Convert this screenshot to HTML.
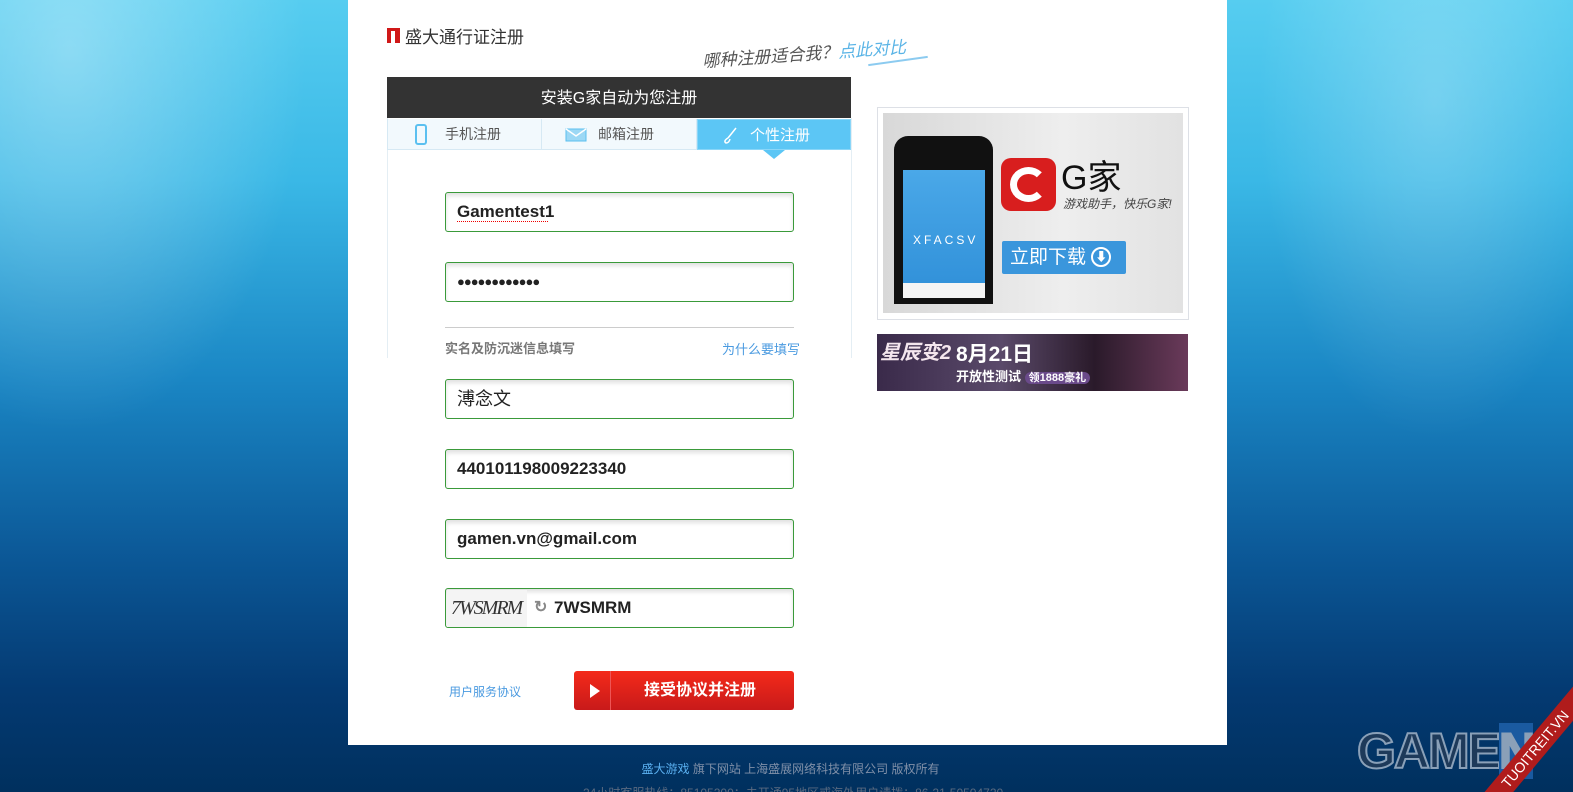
<!DOCTYPE html>
<html><head><meta charset="utf-8"><style>
*{margin:0;padding:0;box-sizing:border-box}
html,body{width:1573px;height:792px;overflow:hidden;background:#00305e}
body{position:relative;font-family:"Liberation Sans","Noto Sans CJK SC",sans-serif;}
.bg{position:absolute;left:0;top:0;width:1573px;height:792px;background:linear-gradient(180deg,#56cdf0 0px,#3ab8e6 180px,#1a86c4 380px,#0b5796 560px,#043a72 690px,#00305e 792px);}
.glow{position:absolute;left:0;top:0;width:348px;height:500px;background:radial-gradient(ellipse at 20% 10%,rgba(255,255,255,.35),rgba(255,255,255,0) 60%)}
.glow2{position:absolute;left:1227px;top:0;width:346px;height:500px;background:radial-gradient(ellipse at 60% 20%,rgba(255,255,255,.25),rgba(255,255,255,0) 60%)}
.panel{position:absolute;left:348px;top:0;width:879px;height:745px;background:#fff}
.abs{position:absolute}
.inp{position:absolute;left:445px;width:349px;height:40px;border:1px solid #3a9a3a;border-radius:3px;box-shadow:inset 0 3px 4px rgba(0,0,0,.12);font-size:17px;font-weight:bold;color:#222;padding-left:11px;line-height:38px;background:#fff}
.tab{position:absolute;top:119px;height:31px;font-size:14px;color:#555;line-height:31px;background:#f2f9fd;border-right:1px solid #d6e9f4}
</style></head><body>
<div class="bg"></div>
<div class="glow"></div><div class="glow2"></div>
<div class="panel"></div>
<div class="abs" style="left:387px;top:28px;width:13px;height:15px;background:#d01818"></div>
<div class="abs" style="left:391px;top:31px;width:4px;height:12px;background:#fff"></div>
<div class="abs" style="left:405px;top:23px;font-size:17px;color:#333">盛大通行证注册</div>
<div class="abs" style="left:702px;top:40px;font-size:17px;color:#555;font-style:italic;transform:rotate(-4deg)">哪种注册适合我？<span style="color:#5ab4e6">点此对比</span></div>
<div class="abs" style="left:868px;top:60px;width:60px;height:2px;background:#8ccbf0;transform:rotate(-8deg)"></div>
<div class="abs" style="left:387px;top:118px;width:465px;height:240px;border-left:1px solid #e4eef4;border-right:1px solid #e4eef4;background:#fff"></div>
<div class="abs" style="left:387px;top:77px;width:464px;height:41px;background:#333;color:#fff;font-size:16px;text-align:center;line-height:43px">安装G家自动为您注册</div>
<div class="tab" style="left:387px;width:155px;border-left:1px solid #d6e9f4;border-bottom:1px solid #d6e9f4"><span class="abs" style="left:27px;top:5px;width:12px;height:21px;border:2px solid #5bc0f0;border-radius:3px"></span><span style="padding-left:57px">手机注册</span></div>
<div class="tab" style="left:542px;width:155px;border-bottom:1px solid #d6e9f4"><svg class="abs" style="left:23px;top:9px" width="22" height="14"><rect x="1" y="1" width="20" height="12" fill="#9cd8f5" stroke="#5bc0f0"/><path d="M1 1 L11 8 L21 1" stroke="#fff" fill="none" stroke-width="1.5"/></svg><span style="padding-left:56px">邮箱注册</span></div>
<div class="tab" style="left:697px;width:154px;background:#5cc6f5;color:#fff;font-size:15px;border:1px solid #8ad6f8"><svg class="abs" style="left:24px;top:7px" width="16" height="17"><path d="M14 1 L6 11 M6 11 Q1 14 4 16 Q7 16 8 12" stroke="#fff" fill="none" stroke-width="1.5"/></svg><span style="padding-left:52px">个性注册</span></div>
<div class="abs" style="left:763px;top:150px;width:0;height:0;border-left:11px solid transparent;border-right:11px solid transparent;border-top:9px solid #5cc6f5"></div>
<div class="inp" style="top:192px">Gamentest1<span class="abs" style="left:11px;top:28px;width:91px;border-bottom:1px dotted #e00"></span></div>
<div class="inp" style="top:262px;font-size:13px;letter-spacing:-1px">●●●●●●●●●●●●</div>
<div class="abs" style="left:445px;top:327px;width:349px;height:1px;background:#ccc"></div>
<div class="abs" style="left:445px;top:338px;font-size:13px;font-weight:bold;color:#777">实名及防沉迷信息填写</div>
<div class="abs" style="left:722px;top:339px;font-size:13px;color:#4a9ae0">为什么要填写</div>
<div class="inp" style="top:379px;font-weight:normal;font-size:18px">溥念文</div>
<div class="inp" style="top:449px">440101198009223340</div>
<div class="inp" style="top:519px">gamen.vn@gmail.com</div>
<div class="inp" style="top:588px;padding-left:0"><span class="abs" style="left:1px;top:1px;width:80px;height:37px;background:#f4f4f4;font-family:'Liberation Serif',serif;font-style:italic;font-size:20px;font-weight:normal;letter-spacing:-2px;color:#333;padding-left:4px;line-height:37px">7WSMRM</span><span class="abs" style="left:88px;top:0;color:#888;font-size:16px">↻</span><span class="abs" style="left:108px;top:0">7WSMRM</span></div>
<div class="abs" style="left:449px;top:683px;font-size:12px;color:#4a9ae0">用户服务协议</div>
<div class="abs" style="left:574px;top:671px;width:220px;height:39px;border-radius:3px;background:linear-gradient(#f42a1a,#c81a1a);color:#fff;font-size:16px;font-weight:bold;line-height:39px"><span class="abs" style="left:36px;top:0;width:1px;height:39px;background:#e55"></span><span class="abs" style="left:16px;top:13px;border-left:10px solid #fff;border-top:7px solid transparent;border-bottom:7px solid transparent"></span><span style="padding-left:70px">接受协议并注册</span></div>
<div class="abs" style="left:877px;top:107px;width:312px;height:213px;border:1px solid #dde0e6;background:#fff"></div>
<div class="abs" style="left:883px;top:113px;width:300px;height:200px;background:linear-gradient(90deg,#d8d8d8,#eee 60%,#e2e2e2)"></div>
<div class="abs" style="left:894px;top:136px;width:99px;height:168px;background:#111;border-radius:14px 14px 0 0"></div>
<div class="abs" style="left:903px;top:170px;width:82px;height:128px;background:linear-gradient(#4aa8e8,#2f8fd8)"></div>
<div class="abs" style="left:903px;top:283px;width:82px;height:15px;background:#f4f4f4"></div>
<div class="abs" style="left:913px;top:233px;font-size:12px;color:#fff;letter-spacing:3px">XFACSV</div>
<div class="abs" style="left:1001px;top:158px;width:55px;height:53px;background:#d81e1e;border-radius:10px"></div>
<div class="abs" style="left:1010px;top:167px;width:37px;height:35px;border:7px solid #fff;border-radius:50%;border-right-color:transparent"></div>
<div class="abs" style="left:1061px;top:150px;font-size:34px;color:#111">G家</div>
<div class="abs" style="left:1063px;top:195px;font-size:12px;color:#444;font-style:italic">游戏助手，快乐G家!</div>
<div class="abs" style="left:1002px;top:241px;width:124px;height:33px;background:#3a96dc;border-radius:2px;color:#fff;font-size:19px;line-height:33px;padding-left:8px">立即下载 <span style="display:inline-block;width:20px;height:20px;border:2px solid #fff;border-radius:50%;font-size:12px;line-height:16px;text-align:center;vertical-align:2px">⬇</span></div>
<div class="abs" style="left:877px;top:334px;width:311px;height:57px;background:linear-gradient(90deg,#3a2a4a,#5a4a6a 40%,#2a1a2a 70%,#6a3a5a)"></div>
<div class="abs" style="left:880px;top:336px;font-size:20px;font-weight:bold;color:#f4e6ee;font-style:italic">星辰变2</div>
<div class="abs" style="left:956px;top:338px;font-size:21px;font-weight:bold;color:#fff">8月21日</div>
<div class="abs" style="left:956px;top:366px;font-size:13px;font-weight:bold;color:#fff">开放性测试 <span style="background:#6a4a8a;border-radius:8px;padding:0 4px;font-size:11px">领1888豪礼</span></div>
<div class="abs" style="left:0;top:760px;width:1573px;text-align:center;font-size:12px;color:#8090a8;padding-left:8px"><span style="color:#5ab0f0">盛大游戏</span> 旗下网站 上海盛展网络科技有限公司 版权所有</div>
<div class="abs" style="left:583px;top:784px;font-size:12px;color:#5a6a80">24小时客服热线：85105200；未开通95地区或海外用户请拨：86-21-50504720</div>
<div class="abs" style="left:1357px;top:722px;font-size:50px;font-weight:bold;color:#1e3a5a;-webkit-text-stroke:2px #8aa0b8;letter-spacing:-2px">GAME<span style="color:#8aa0b8;background:#1a5aa0">N</span></div>
<div class="abs" style="left:1440px;top:738px;width:190px;height:22px;background:#b01c1c;transform:rotate(-50deg);color:#fff;font-size:14px;text-align:center;line-height:22px">TUOITREIT.VN</div>
</body></html>
